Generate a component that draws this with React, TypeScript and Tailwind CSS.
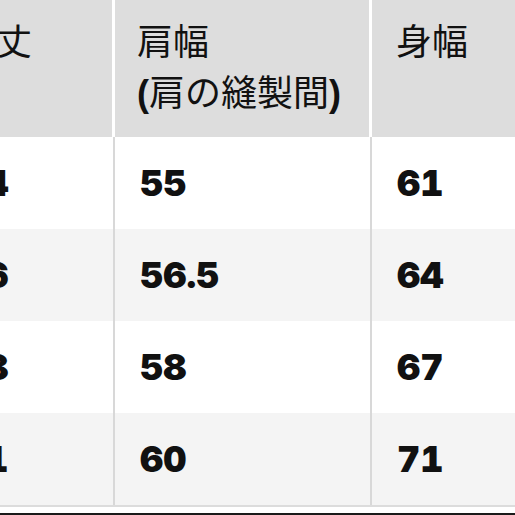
import React from "react"

/* Size chart slice: partial first column, shoulder width and body width. */

const ROWS = [
  { length: "74", shoulder: "55", body: "61" },
  { length: "76", shoulder: "56.5", body: "64" },
  { length: "78", shoulder: "58", body: "67" },
  { length: "81", shoulder: "60", body: "71" },
]

const jp = "font-['Noto_Sans_CJK_JP','Noto_Sans',sans-serif]"
const num = "font-['Inter','Liberation_Sans',sans-serif] font-black tabular-nums"

export default function App() {
  return (
    <div className="h-[515px] w-[515px] overflow-hidden bg-white text-[#111]">
      <div className="ml-[-62px] w-[640px]">
        <div className="grid h-[137px] grid-cols-[177px_257px_1fr] bg-white">
          <div className={`border-r-[3px] border-white bg-[#dddddd] pl-[22px] pt-[14px] text-[36px] leading-[51px] ${jp}`}>
            着丈
          </div>
          <div className={`border-r-[3px] border-white bg-[#dddddd] pl-[22px] pt-[14px] text-[36px] leading-[51px] ${jp}`}>
            <div>肩幅</div>
            <div>
              <span className="font-['Liberation_Sans',sans-serif] font-bold">(</span>
              肩の縫製間
              <span className="font-['Liberation_Sans',sans-serif] font-bold">)</span>
            </div>
          </div>
          <div className={`bg-[#dddddd] pl-6 pt-[14px] text-[36px] leading-[51px] ${jp}`}>
            身幅
          </div>
        </div>

        {ROWS.map((r, i) => (
          <div
            key={r.shoulder}
            className={`grid h-[92px] grid-cols-[177px_257px_1fr] items-stretch text-[36px] ${num} ${
              i % 2 === 1 ? "bg-[#f4f4f4]" : "bg-white"
            }`}
          >
            <div className="flex items-center border-r-2 border-[#d8d8d8] pl-6">{r.length}</div>
            <div className="flex items-center border-r-2 border-[#d8d8d8] pl-[25px]">{r.shoulder}</div>
            <div className="flex items-center pl-[25px]">{r.body}</div>
          </div>
        ))}

        <div className="h-[2px] bg-[#dcdcdc]" />
        <div className="h-[6px] bg-white" />
        <div className="h-[3px] bg-[#1a1a1a]" />
      </div>
    </div>
  )
}
